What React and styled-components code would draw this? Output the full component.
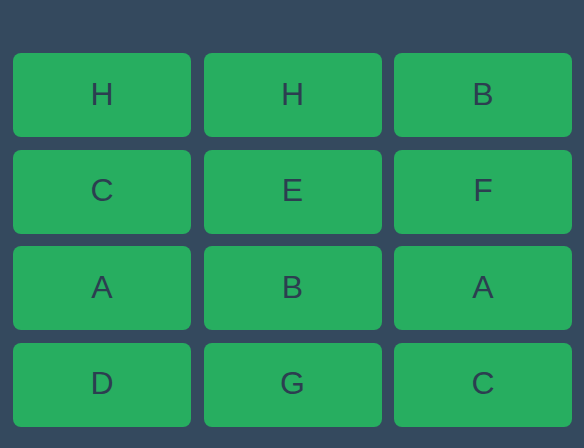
import React from 'react';
import styled, { createGlobalStyle } from 'styled-components';

const GlobalStyle = createGlobalStyle`
  html, body {
    margin: 0;
    padding: 0;
    background: #34495e;
  }
  body {
    font-family: "Liberation Sans", Arial, sans-serif;
  }
`;

const letters = ['H', 'H', 'B', 'C', 'E', 'F', 'A', 'B', 'A', 'D', 'G', 'C'];

const App = () => {
  return (
    <>
      <GlobalStyle />
      <Board>
        {letters.map((l, i) => (
          <Card key={i}>{l}</Card>
        ))}
      </Board>
    </>
  );
};

const Board = styled.div`
  box-sizing: border-box;
  width: 584px;
  height: 448px;
  padding: 53px 12px 0 13px;
  display: grid;
  grid-template-columns: repeat(3, 178px);
  grid-auto-rows: 84px;
  gap: 12.5px;
  align-content: start;
  background: #34495e;
`;

const Card = styled.div`
  box-sizing: border-box;
  display: flex;
  align-items: center;
  justify-content: center;
  padding-bottom: 2px;
  background: #27ae60;
  border-radius: 8px;
  color: #2c3e50;
  font-size: 32px;
`;

export default App;
